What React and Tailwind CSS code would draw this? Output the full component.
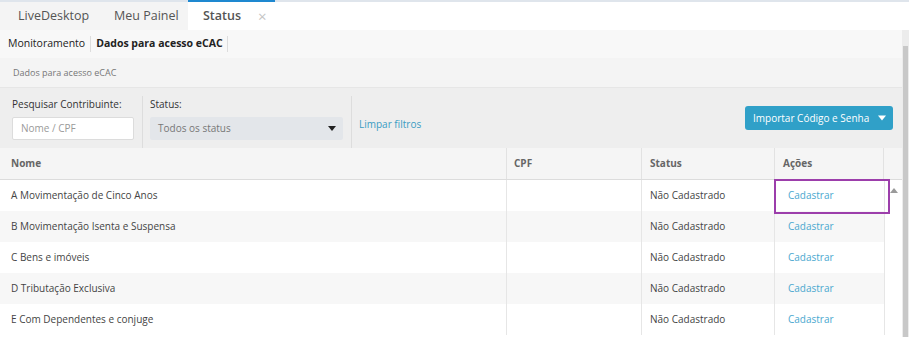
import React from 'react';

const ROWS = [
  'A Movimentação de Cinco Anos',
  'B Movimentação Isenta e Suspensa',
  'C Bens e imóveis',
  'D Tributação Exclusiva',
  'E Com Dependentes e conjuge',
];

function Caret({ className }) {
  return (
    <svg viewBox="0 0 10 6" className={className}>
      <path d="M0 0h10L5 6z" fill="currentColor" />
    </svg>
  );
}

function TopTabs() {
  return (
    <div className="flex h-[30px] border-t-2 border-[#dfe5ec] bg-white">
      <div className="w-[95px] flex items-center pl-[18px] bg-[#f4f4f4] text-[12.5px] text-[#555]">LiveDesktop</div>
      <div className="w-[93px] flex items-center pl-[19px] bg-[#f4f4f4] text-[12.5px] text-[#555]">Meu Painel</div>
      <div className="w-[87px] -mt-[2px] border-t-2 border-[#1e88d0] flex items-center pl-[15px] bg-white text-[12.5px] font-semibold text-[#555]">
        Status
        <span className="ml-[17px] text-[15px] font-normal text-[#c4c4c4]">×</span>
      </div>
      <div className="flex-1" />
    </div>
  );
}

function Filters() {
  return (
    <div className="h-[61px] bg-[#eeeeee] border-t border-[#e6e6e6] flex items-start pt-[8px] pl-[12px] pr-[9px]">
      <div className="flex flex-col">
        <span className="text-[10px] text-[#333] leading-[14px] mt-[1px]">Pesquisar Contribuinte:</span>
        <div className="mt-[6px] w-[122px] h-[23px] bg-white border border-[#dcdcdc] rounded-[2px] flex items-center pl-[8px] text-[10px] text-[#9a9a9a]">Nome / CPF</div>
      </div>
      <div className="w-px h-[53px] bg-[#dddddd] ml-[8px] mr-[7px]" />
      <div className="flex flex-col">
        <span className="text-[10px] text-[#333] leading-[14px] mt-[1px]">Status:</span>
        <div className="mt-[6px] w-[193px] h-[23px] bg-[#e3e6ea] rounded-[2px] flex items-center justify-between pl-[8px] pr-[7px] text-[10px] text-[#777]">
          Todos os status
          <Caret className="w-[8px] h-[5px] text-[#222]" />
        </div>
      </div>
      <div className="w-px h-[53px] bg-[#dddddd] ml-[8px] mr-[7px]" />
      <span className="mt-[21px] text-[10px] text-[#3a9cc3]">Limpar filtros</span>
      <div className="flex-1" />
      <div className="mt-[10px] w-[148px] h-[24px] rounded-[3px] bg-[#30a0c8] text-white text-[10px] flex items-center justify-between pl-[8px] pr-[7px]">
        Importar Código e Senha
        <Caret className="w-[8px] h-[6px] text-white" />
      </div>
    </div>
  );
}

function Table() {
  const cols = 'grid grid-cols-[507px_135px_133px_109px_18px]';
  return (
    <div className="bg-white">
      <div className={`${cols} h-[32px] bg-[#f5f5f5] border-b border-[#dcdcdc] text-[10px] font-bold text-[#666]`}>
        <div className="flex items-center pl-[11px] border-r border-[#e2e2e2]">Nome</div>
        <div className="flex items-center pl-[7px] border-r border-[#e2e2e2]">CPF</div>
        <div className="flex items-center pl-[8px] border-r border-[#e2e2e2]">Status</div>
        <div className="flex items-center pl-[8px] border-r border-[#e2e2e2]">Ações</div>
        <div />
      </div>
      {ROWS.map((name, i) => (
        <div key={name} className={`${cols} h-[31px] text-[10px] text-[#444]`}>
          <div className={`flex items-center pl-[11px] border-r border-[#e6e6e6] ${i % 2 ? 'bg-[#f7f7f7]' : 'bg-white'}`}>{name}</div>
          <div className={`border-r border-[#e6e6e6] ${i % 2 ? 'bg-[#f7f7f7]' : 'bg-white'}`} />
          <div className={`flex items-center pl-[8px] border-r border-[#e6e6e6] ${i % 2 ? 'bg-[#f7f7f7]' : 'bg-white'}`}>Não Cadastrado</div>
          <div className={`relative flex items-center pl-[13px] text-[#4aa8cf] ${i % 2 ? 'bg-[#f7f7f7]' : 'bg-white'}`}>
            Cadastrar
            {i === 0 && (
              <div className="absolute z-10 -left-[1px] -top-[1px] w-[116px] h-[35px] border-2 border-[#9c3eab]" />
            )}
          </div>
          <div className="bg-white border-l border-[#e6e6e6] flex justify-center pt-[8px]">
            {i === 0 && <svg viewBox="0 0 8 5" className="w-[8px] h-[5px]"><path d="M0 5L4 0l4 5z" fill="#9a9a9a" /></svg>}
          </div>
        </div>
      ))}
    </div>
  );
}

export default function App() {
  return (
    <div className="w-[909px] h-[337px] overflow-hidden bg-white flex flex-col" style={{ fontFamily: '"Open Sans", sans-serif' }}>
      <TopTabs />
      <div className="flex flex-1 min-h-0">
        <div className="flex-1 flex flex-col min-w-0">
          <div className="h-[28px] bg-[#f8f8f8] flex items-center pl-[8px] text-[10.5px] text-[#222]">
            <span>Monitoramento</span>
            <span className="w-px h-[16px] bg-[#dddddd] mx-[5px]" />
            <span className="font-bold">Dados para acesso eCAC</span>
            <span className="w-px h-[16px] bg-[#dddddd] ml-[4px]" />
          </div>
          <div className="h-[29px] bg-[#f4f4f4] flex items-center pl-[13px] text-[9px] text-[#777]">Dados para acesso eCAC</div>
          <Filters />
          <Table />
        </div>
        <div className="w-[7px] bg-[#ececec] flex flex-col">
          <div className="h-[16px]" />
          <div className="flex-1 mx-[1px] bg-[#c8c8c8]" />
        </div>
      </div>
    </div>
  );
}
